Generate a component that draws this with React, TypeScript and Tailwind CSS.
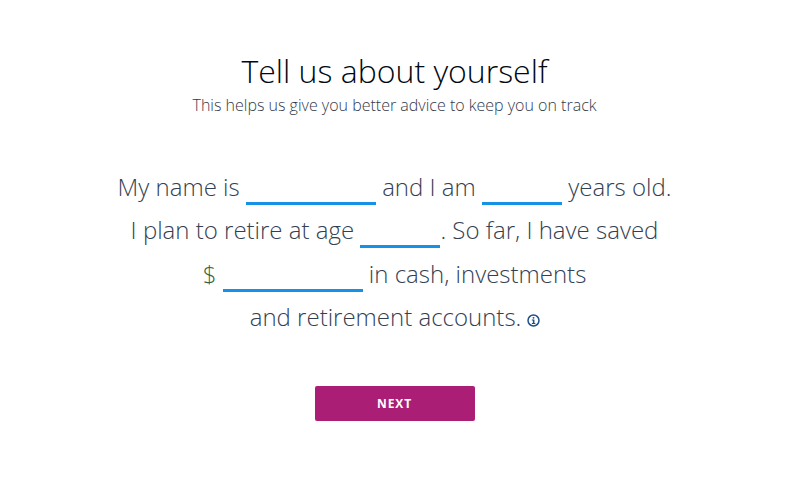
function Blank({ className }: { className: string }) {
  return (
    <input
      type="text"
      className={`inline-block h-[26px] border-b-[3px] border-[#1592e6] bg-transparent align-[-4px] leading-none outline-none ${className}`}
    />
  );
}

export default function App() {
  return (
    <div className="flex min-h-[493px] w-full flex-col items-center bg-white pt-[49px] font-['Open_Sans',sans-serif] font-light">
      <h1 className="text-[32px] leading-[44px] font-light text-[#000814]">Tell us about yourself</h1>
      <p className="mt-[1px] text-[16px] leading-[22px] text-[#333a4a]">This helps us give you better advice to keep you on track</p>

      <div className="mt-[49px] w-[600px] text-center text-[24px] leading-[43.3px] text-[#343f52]">
        <div>
          My name is <Blank className="w-[130px]" /> and I am <Blank className="w-[80px]" /> years old.
        </div>
        <div>
          I plan to retire at age <Blank className="w-[80px]" />. So far, I have saved
        </div>
        <div>
          <span className="text-[#3f5f42]">$</span> <Blank className="w-[140px]" /> in cash, investments
        </div>
        <div className="flex items-center justify-center gap-[6px] pl-[1px]">
          <span>and retirement accounts.</span>
          <svg viewBox="0 0 14 14" className="mt-[7px] h-[13px] w-[13px] text-[#1f4e8c]" fill="none">
            <circle cx="7" cy="7" r="5.9" stroke="currentColor" strokeWidth="1.6" />
            <circle cx="7" cy="4.1" r="1" fill="currentColor" />
            <path d="M5.2 6h2.8v3.7h1v1.1H5.2V9.7h1.1V7.1H5.2z" fill="currentColor" />
          </svg>
        </div>
      </div>

      <button
        type="button"
        className="mt-[48px] h-[35px] w-[160px] rounded-[2px] bg-[#aa1f75] pt-[1px] text-[12px] font-bold tracking-[0.9px] text-white"
      >
        NEXT
      </button>
    </div>
  );
}
